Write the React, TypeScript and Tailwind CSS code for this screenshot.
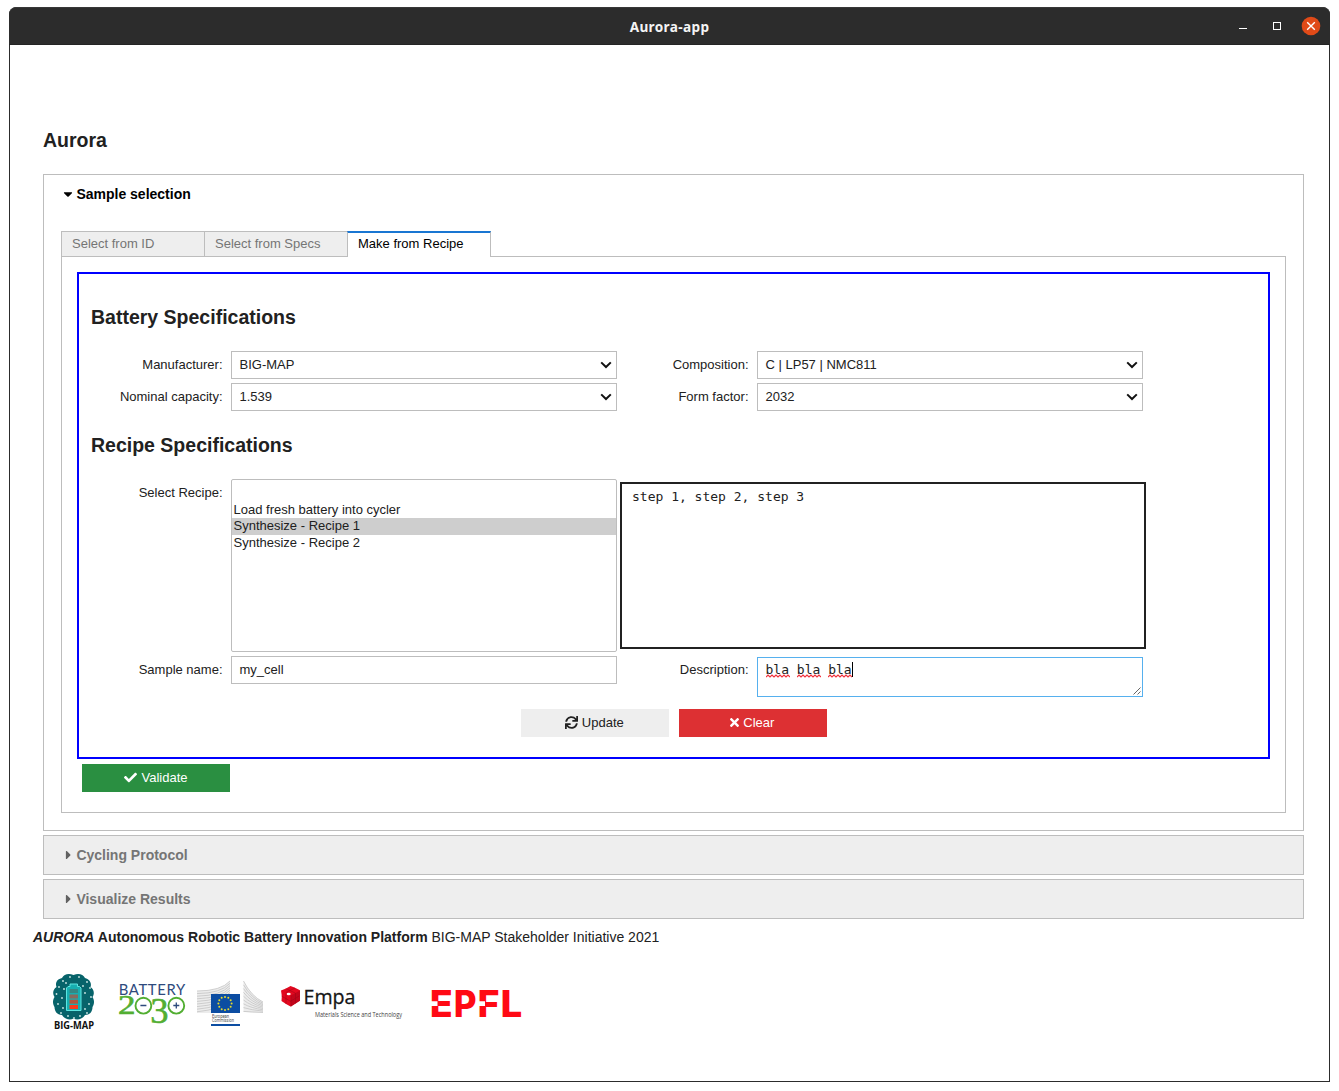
import type { ReactNode } from 'react';
import { FaCaretDown, FaCaretRight, FaCheck, FaSync, FaTimes } from 'react-icons/fa';

function TitleBar() {
  return (
    <header className="grid h-[38px] shrink-0 grid-cols-[1fr_auto_1fr] items-center rounded-t-[7px] border-t border-b border-t-[#383838] border-b-[#242424] bg-[#2c2c2c]">
      <div />
      <h1 className="pt-[2px] font-['Noto_Sans'] text-[13.6px] font-bold tracking-[0.35px] text-[#f4f4f4]">Aurora-app</h1>
      <div className="flex items-center justify-end gap-[22px] pr-[9px]">
        <span className="mt-[5px] mr-[4px] h-px w-2 bg-white" />
        <span className="mr-[-1px] size-2 border border-white" />
        <svg className="-ml-px size-5" viewBox="0 0 20 20">
          <circle cx="10" cy="10" r="9.300" fill="#e04a18" />
          <path d="M6.200 6.200l7.600 7.600M13.800 6.200l-7.600 7.600" stroke="#fff" strokeWidth="1.400" />
        </svg>
      </div>
    </header>
  );
}

function Label({ children }: { children: ReactNode }) {
  return <span className="mr-[8.500px] w-[131.500px] shrink-0 text-right leading-7">{children}</span>;
}

function Select({ label, value }: { label: string; value: string }) {
  return (
    <div className="flex w-[526px]">
      <Label>{label}</Label>
      <div className="flex h-7 w-[386px] items-center justify-between border border-[#bdbdbd] pr-[4px] pl-[7.500px]">
        <span>{value}</span>
        <svg className="h-3 w-3" viewBox="0 0 12 12" fill="none" stroke="#111" strokeWidth="2">
          <path d="M1.200 3.400l4.800 4.600 4.800-4.600" />
        </svg>
      </div>
    </div>
  );
}

function Tab({ label, active }: { label: string; active?: boolean }) {
  return active ? (
    <div className="relative -mb-px -ml-px h-[26px] w-36 border-x border-t-2 border-x-[#bdbdbd] border-t-[#1976d2] bg-white pl-[10px] leading-[22px] text-black">
      {label}
    </div>
  ) : (
    <div className="h-[25px] w-36 border border-b-0 border-[#bdbdbd] bg-[#eee] pl-[10px] leading-[23px] text-[#757575] not-first:-ml-px">
      {label}
    </div>
  );
}

function Collapsed({ title }: { title: string }) {
  return (
    <section className="mt-1 flex h-10 items-center border border-[#bdbdbd] bg-[#eee] pl-[20px] text-[14px] font-bold text-[#757575]">
      <FaCaretRight className="mr-[3.400px] -mt-px w-[9px] text-[#616161]" />
      {title}
    </section>
  );
}

function Misspelled({ children }: { children: ReactNode }) {
  return (
    <span className="relative inline-block">
      {children}
      <svg className="absolute top-[12px] left-0 h-[4px] w-[24px]" viewBox="0 0 24 4" fill="none" stroke="#f0303a" strokeWidth="1.200">
        <path d="M0 3l2-2 2 2 2-2 2 2 2-2 2 2 2-2 2 2 2-2 2 2 2-2 2 2" />
      </svg>
    </span>
  );
}

const brainDots = [
  [17, 4], [26, 4], [10, 8], [34, 9], [6, 14], [37, 15], [11, 16], [32, 20], [3.5, 21], [9, 25], [38, 24],
  [5, 31], [36, 31], [10, 35], [32, 36], [8, 40], [34, 40], [15, 43], [27, 43], [13, 10], [30, 13], [21, 45],
];

function BigMapLogo() {
  return (
    <svg width="44" height="60" viewBox="0 0 44 60" overflow="visible">
      <path
        d="M20.500 2C15 0 11 1.500 9 5C4 6 2 10 3.500 14C-0.500 17-0.500 21 1.500 24C-0.500 27-0.500 31 1.500 34C1.500 39 5 42 9 42C11.500 46 16.500 47.500 20.500 45.500C24.500 47.500 29.500 46 32 42C36.500 42 39.500 39 39.500 34C41.500 31 41.500 27 39.500 24C41.500 21 41.500 17 37.500 14C39 10 36.500 6 32 5C30 1.500 26 0 20.500 2Z"
        fill="#07636a"
      />
      {brainDots.map(([x, y]) => (
        <circle key={`${x}-${y}`} cx={x} cy={y} r="0.9" fill="#cfe9e6" />
      ))}
      <path d="M17 11h7.500v2.500h2L28 15v22.500H13.500V15l1.500-1.500h2z" fill="#17aeb0" stroke="#5ce6e0" strokeWidth="1" />
      <path d="M16.500 16h8.500v4h-8.500z" fill="#358783" />
      <path d="M16.500 21.500h8.500v4h-8.500z" fill="#876a5c" />
      <path d="M16.500 26.700h8.500v4h-8.500z" fill="#b4553f" />
      <path d="M16.500 32h8.500v4h-8.500z" fill="#fb3a1c" />
      <text x="1" y="56" fontFamily="Open Sans" fontSize="9.800" fontWeight="700" fill="#111" textLength="40" lengthAdjust="spacingAndGlyphs">
        BIG-MAP
      </text>
    </svg>
  );
}

function BatteryLogo() {
  return (
    <svg width="68" height="44" viewBox="0 0 68 44" overflow="visible">
      <text x="0.700" y="12.500" fontFamily="Lato" fontSize="14.800" fill="#2e4a7d" textLength="66.500" lengthAdjust="spacing">
        BATTERY
      </text>
      <g fontFamily="Liberation Serif" fill="#52ae32" stroke="#52ae32" strokeWidth="0.6">
        <text x="0" y="31.800" fontSize="26.500" textLength="17.500" lengthAdjust="spacingAndGlyphs">2</text>
        <text x="32.300" y="40.500" fontSize="36.500">3</text>
      </g>
      <g fill="none" stroke="#52ae32" strokeWidth="1.900">
        <circle cx="25.400" cy="23.700" r="7.900" />
        <circle cx="58.300" cy="23.700" r="7.900" />
      </g>
      <path d="M22.400 23.500h6M55.300 23.500h6M58.300 20.500v6" stroke="#2e4a7d" strokeWidth="1.300" />
    </svg>
  );
}

const stars = Array.from({ length: 12 }, (_, i) => {
  const a = (i * Math.PI) / 6;
  return [28 + 6.6 * Math.sin(a), 23.5 - 6.6 * Math.cos(a)];
});

function CommissionLogo() {
  return (
    <svg width="67" height="47" viewBox="0 0 67 47" overflow="visible">
      <path d="M0 11Q24 11 33 1V14H14V33H0z" fill="#ececec" />
      <path d="M46.500 1Q54 16 66 22V33L46.500 32z" fill="#ececec" />
      <g fill="none" stroke="#c4c4c4" strokeWidth="0.800">
        {[0, 1, 2, 3, 4, 5, 6, 7, 8].map((i) => (
          <path key={i} d={`M0 ${11 + i * 2.6}Q24 ${11 + i * 2.3} 33 ${1 + i * 2.3}`} />
        ))}
        {[0, 1, 2, 3, 4, 5, 6, 7, 8].map((i) => (
          <path key={i} d={`M46.500 ${1 + i * 3.8}Q54 ${16 + i * 2} 66 ${22 + i * 1.3}`} />
        ))}
      </g>
      <path d="M14 14h29v19H14z" fill="#0c4da2" />
      {stars.map(([x, y]) => (
        <circle key={`${x}-${y}`} cx={x} cy={y} r="1" fill="#e8da2c" />
      ))}
      <g fontFamily="Roboto" fontSize="4.800" fill="#555">
        <text x="15" y="38" textLength="17" lengthAdjust="spacingAndGlyphs">European</text>
        <text x="15" y="42.300" textLength="22" lengthAdjust="spacingAndGlyphs">Commission</text>
      </g>
      <path d="M14 44h29v2H14z" fill="#0c4da2" />
    </svg>
  );
}

function EmpaLogo() {
  return (
    <svg width="124" height="36" viewBox="0 0 124 36" overflow="visible">
      <path d="M10.500 1l4 1.500 5.500 2.800-0.700 4.700 0.500 5.500-4.800 3-4.500 3-4.500-2.500-4.500-3 0.300-5L1 5.500l5-2z" fill="#e3081f" />
      <path d="M11 10.500l9-5v10.200l-9 5.800z" fill="#c2051b" />
      <path d="M1.500 11l9 5.300 9-5.500M6 8.500v10.500M15.500 8v10.500M5.700 3.500l9.500 4.500M15 3L6 7.500M10.800 10.500v11" fill="none" stroke="#9c0416" strokeWidth="0.500" />
      <ellipse cx="8.700" cy="9" rx="2" ry="1.300" fill="#fff" />
      <text x="23.500" y="19" fontFamily="Open Sans" fontSize="20.500" fill="#151515" stroke="#151515" strokeWidth="0.300" textLength="52" lengthAdjust="spacingAndGlyphs">
        Empa
      </text>
      <text x="35" y="31.500" fontFamily="Open Sans" fontSize="6.300" fill="#444" textLength="87" lengthAdjust="spacingAndGlyphs">
        Materials Science and Technology
      </text>
    </svg>
  );
}

function EpflLogo() {
  return (
    <svg width="92" height="30" viewBox="0 0 92 30" overflow="visible">
      <g fontFamily="Inter" fontSize="37" fontWeight="800" fill="#ff0a14">
        <text x="-1.200" y="28" textLength="23" lengthAdjust="spacingAndGlyphs">E</text>
        <text x="22.700" y="28" textLength="22.800" lengthAdjust="spacingAndGlyphs">P</text>
        <text x="46.600" y="28" textLength="22" lengthAdjust="spacingAndGlyphs">F</text>
        <text x="69.600" y="28" textLength="21.800" lengthAdjust="spacingAndGlyphs">L</text>
      </g>
      <path d="M0 12.200h6.500v4.800H0zM48 12.200h6v4.800h-6z" fill="#fff" />
    </svg>
  );
}

export default function App() {
  return (
    <div className="h-[1091px] bg-white pt-[7px] pl-[9px] font-['Liberation_Sans',sans-serif] text-[13px] text-[#212121]">
      <div className="flex h-[1075px] w-[1321px] flex-col rounded-t-[8px] bg-[#2c2c2c]">
        <TitleBar />
        <main className="mx-px mb-px flex-1 bg-white pt-[83px] pl-[33px]">
          <h2 className="h-[46px] text-[19.5px] leading-6 font-bold">Aurora</h2>

          <section className="h-[657px] w-[1261px] border border-[#bdbdbd] px-[17px]">
            <div className="flex h-[56px] items-start pt-[11px] pl-[2px] text-[14px] leading-4 font-bold text-black">
              <FaCaretDown className="mt-[1px] mr-[3.400px] w-[10px]" />
              Sample selection
            </div>
            <div className="flex h-[25px]">
              <Tab label="Select from ID" />
              <Tab label="Select from Specs" />
              <Tab label="Make from Recipe" active />
            </div>

            <div className="h-[557px] border border-[#bdbdbd] p-[15px]">
              <div className="h-[487px] border-2 border-[#0000ff] pt-[31px] pl-[12px]">
                <h2 className="h-[46px] text-[19.5px] leading-6 font-bold">Battery Specifications</h2>
                <div className="grid grid-cols-[526px_526px] gap-y-1">
                  <Select label="Manufacturer:" value="BIG-MAP" />
                  <Select label="Composition:" value="C | LP57 | NMC811" />
                  <Select label="Nominal capacity:" value="1.539" />
                  <Select label="Form factor:" value="2032" />
                </div>
                <h2 className="mt-[22px] h-[46px] text-[19.5px] leading-6 font-bold">Recipe Specifications</h2>

                <div className="flex">
                  <div className="flex">
                    <Label>Select Recipe:</Label>
                    <ul className="h-[173px] w-[386px] rounded-[2px] border border-[#bdbdbd] pt-[5px] leading-[16.500px] *:pl-[1.500px]">
                      <li className="h-[16.500px]" />
                      <li>Load fresh battery into cycler</li>
                      <li className="bg-[#cecece]">Synthesize - Recipe 1</li>
                      <li>Synthesize - Recipe 2</li>
                    </ul>
                  </div>
                  <div className="mt-[3px] ml-[3px] h-[167px] w-[526px] border-2 border-[#212121] px-[10px] pt-[5px] font-['DejaVu_Sans_Mono',monospace] leading-4">
                    step 1, step 2, step 3
                  </div>
                </div>

                <div className="mt-1 flex h-[53px]">
                  <div className="flex w-[526px]">
                    <Label>Sample name:</Label>
                    <div className="h-7 w-[386px] border border-[#bdbdbd] pl-[7.500px] leading-[26px]">my_cell</div>
                  </div>
                  <div className="flex">
                    <Label>Description:</Label>
                    <div className="relative mt-px flex h-10 w-[386px] items-start border border-[#56b0ee] pt-[4px] pl-[7.500px] font-['DejaVu_Sans_Mono',monospace] leading-4">
                      <p>
                        <Misspelled>bla</Misspelled> <Misspelled>bla</Misspelled> <Misspelled>bla</Misspelled>
                      </p>
                      <span className="ml-[0.500px] h-[15px] w-px bg-black" />
                      <svg className="absolute right-[1px] bottom-[1px] size-2" viewBox="0 0 8 8" stroke="#666" strokeWidth="1">
                        <path d="M0.500 7.500l7-7M4.500 7.500l3-3" />
                      </svg>
                    </div>
                  </div>
                </div>

                <div className="flex gap-[10px] pl-[430px]">
                  <button className="flex h-7 w-[148px] items-center justify-center gap-1 bg-[#eee] pr-[1.400px]">
                    <FaSync className="-mt-[2px]" /> Update
                  </button>
                  <button className="flex h-7 w-[148px] items-center justify-center gap-1 bg-[#dd3033] pr-[1.400px] text-white">
                    <FaTimes className="-mt-[2px] w-[9px]" /> Clear
                  </button>
                </div>
              </div>
              <button className="mt-[5px] ml-[5px] flex h-7 w-[148px] items-center justify-center gap-1 bg-[#2a8f41] text-white">
                <FaCheck className="-mt-[2px]" /> Validate
              </button>
            </div>
          </section>

          <div className="w-[1261px]">
            <Collapsed title="Cycling Protocol" />
            <Collapsed title="Visualize Results" />
          </div>

          <footer className="-ml-[10px]">
            <p className="mt-[10px] text-[14px] leading-4">
              <strong>
                <em>AURORA</em> Autonomous Robotic Battery Innovation Platform
              </strong>{' '}
              BIG-MAP Stakeholder Initiative 2021
            </p>
            <div className="mt-[28px] flex items-start pl-[20px]">
              <BigMapLogo />
              <div className="mt-[9px] ml-[21px]"><BatteryLogo /></div>
              <div className="mt-[7px] ml-[11px]"><CommissionLogo /></div>
              <div className="mt-[12px] ml-[16px]"><EmpaLogo /></div>
              <div className="mt-[16px] ml-[27px]"><EpflLogo /></div>
            </div>
          </footer>
        </main>
      </div>
    </div>
  );
}
